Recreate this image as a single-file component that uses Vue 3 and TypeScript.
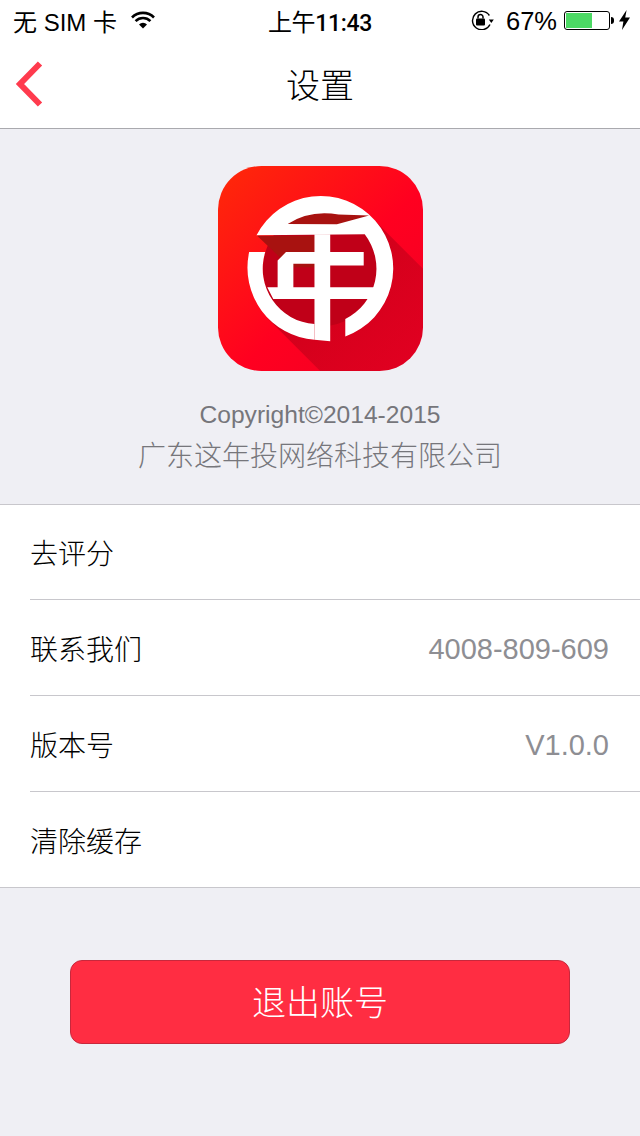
<template>
  <div class="page">
    <header class="top">
      <div class="status">
        <div class="status-left">
          <span class="carrier">无 SIM 卡</span>
          <svg class="wifi" width="24" height="18" viewBox="0 0 24 18">
            <path d="M12 17.500 8 13.600A5.500 5.500 0 0 1 16 13.600Z" fill="#000" />
            <path d="M4.600 10.100A10.500 10.500 0 0 1 19.400 10.100M1 6.500A15.500 15.500 0 0 1 23 6.500" fill="none" stroke="#000" stroke-width="2.600" />
          </svg>
        </div>
        <span class="time">上午<b>11:43</b></span>
        <div class="status-right">
          <svg width="24" height="20" viewBox="0 0 24 20">
            <path d="M20 14.500A9.200 9.200 0 1 1 19.400 5.500" fill="none" stroke="#000" stroke-width="1.400" />
            <path d="M18.800 9.500h5l-2.500 3.500Z" fill="#000" />
            <rect x="6" y="8.500" width="9" height="7" rx="1" fill="#000" />
            <path d="M8 8.500V7a2.500 2.500 0 0 1 5 0v1.500" fill="none" stroke="#000" stroke-width="1.500" />
          </svg>
          <span class="percent">67%</span>
          <div class="battery">
            <div class="battery-body"><div class="battery-fill" :style="{ width: batteryLevel + '%' }"></div></div>
            <div class="battery-tip"></div>
          </div>
          <svg class="bolt" width="11" height="20" viewBox="0 0 11 20">
            <path d="M7.600 0 0 11.600h4.400L3 20l8-12.400H6.200Z" fill="#000" />
          </svg>
        </div>
      </div>
      <nav class="nav">
        <svg class="back" width="30" height="48" viewBox="0 0 30 48">
          <path d="M26 3.500 6 24l20 20.500" fill="none" stroke="#ff3b4e" stroke-width="6" />
        </svg>
        <h1 class="title">设置</h1>
      </nav>
    </header>

    <section class="about">
      <svg class="logo" width="205" height="205" viewBox="25 18 612 612">
        <defs>
          <linearGradient id="bg" x1="0" y1="0" x2="1" y2="1">
            <stop offset="0" stop-color="#ff2a08" />
            <stop offset="0.55" stop-color="#ff0020" />
            <stop offset="1" stop-color="#f00024" />
          </linearGradient>
          <linearGradient id="shade" x1="0.1" y1="0.1" x2="1" y2="1">
            <stop offset="0" stop-color="#7a0010" stop-opacity="0.45" />
            <stop offset="1" stop-color="#7a0010" stop-opacity="0.12" />
          </linearGradient>
          <clipPath id="corner">
            <rect x="25" y="18" width="612" height="612" rx="130" />
          </clipPath>
        </defs>
        <g clip-path="url(#corner)">
          <rect x="25" y="18" width="612" height="612" fill="url(#bg)" />
          <path d="M178 478 330 630H637V325L484 172Z" fill="url(#shade)" />
          <circle cx="331" cy="325" r="172" fill="#c00018" />
          <path d="M140 225A216 216 0 1 1 405 527V475A168 168 0 0 0 463 222Z" fill="#fff" />
          <path d="M233 191Q300 148 385 163L476 166 380 192Z" fill="#a81210" />
          <path d="M142 226H313V320H240Z" fill="#a81210" />
          <path d="M118 275H166A166 166 0 0 0 313 490V537A216 216 0 0 1 118 275Z" fill="#fff" />
          <path d="M313 222H360V275H460V315H360V380H492V415H360V541L313 537V415H190L172 380H203V300L228 275H313V310H250V380H313Z" fill="#fff" />
        </g>
      </svg>
      <p class="copyright">Copyright©2014-2015</p>
      <p class="company">广东这年投网络科技有限公司</p>
    </section>

    <ul class="list">
      <li v-for="row in rows" :key="row.label" class="row">
        <div class="row-inner">
          <span class="row-label">{{ row.label }}</span>
          <span v-if="row.value" class="row-value">{{ row.value }}</span>
        </div>
      </li>
    </ul>

    <div class="logout-wrap">
      <button class="logout" type="button">退出账号</button>
    </div>
  </div>
</template>

<script setup lang="ts">
interface Row {
  label: string
  value?: string
}

const batteryLevel = 62

const rows: Row[] = [
  { label: '去评分' },
  { label: '联系我们', value: '4008-809-609' },
  { label: '版本号', value: 'V1.0.0' },
  { label: '清除缓存' }
]
</script>

<style>
html,
body {
  margin: 0;
  background: #efeff4;
}
</style>

<style scoped>
.page {
  width: 640px;
  height: 1136px;
  overflow: hidden;
  background: #efeff4;
  font-family: "Liberation Sans", "Noto Sans CJK SC", sans-serif;
  color: #000;
}

/* Header */
.top {
  background: #fff;
  border-bottom: 1px solid #a9a9ae;
}

.status {
  height: 40px;
  padding: 0 10px;
  display: grid;
  grid-template-columns: 1fr auto 1fr;
  align-items: center;
  font-size: 24px;
}

.status-left {
  padding-left: 3px;
  display: flex;
  align-items: center;
  gap: 14px;
}

.carrier {
  white-space: nowrap;
}

.time {
  letter-spacing: -0.4px;
}

.time b {
  font-family: Roboto, "Liberation Sans", sans-serif;
  font-weight: 500;
  font-size: 23px;
  letter-spacing: -0.3px;
}

.status-right {
  display: flex;
  align-items: center;
  justify-content: flex-end;
}

.percent {
  margin-left: 12px;
  padding-top: 2px;
  font-size: 25.500px;
}

.battery {
  margin-left: 7px;
  display: flex;
  align-items: center;
}

.battery-body {
  width: 46px;
  height: 19px;
  box-sizing: border-box;
  padding: 1px;
  border: 1px solid #000;
  border-radius: 3px;
}

.battery-fill {
  height: 100%;
  background: #4cd964;
}

.battery-tip {
  width: 3px;
  height: 7px;
  margin-left: 1px;
  background: #000;
  border-radius: 0 3px 3px 0;
}

.bolt {
  margin-left: 5px;
}

.nav {
  height: 88px;
  position: relative;
  display: flex;
  align-items: center;
  justify-content: center;
}

.back {
  position: absolute;
  left: 14px;
  top: 20px;
}

.title {
  margin: 0 0 2px;
  font-size: 34px;
  font-weight: 300;
  color: #000;
}

/* About */
.about {
  height: 375px;
  box-sizing: border-box;
  padding-top: 37px;
  display: flex;
  flex-direction: column;
  align-items: center;
}

.logo {
  display: block;
}

.copyright,
.company {
  margin: 0;
  color: #76767b;
  white-space: nowrap;
}

.copyright {
  margin-top: 29px;
  font-size: 24.600px;
  line-height: 30px;
}

.company {
  margin-top: 9px;
  font-size: 28px;
  font-weight: 300;
  line-height: 36px;
}

/* List */
.list {
  margin: 0;
  padding: 0;
  list-style: none;
  background: #fff;
  border-top: 1px solid #c8c7cc;
  border-bottom: 1px solid #c8c7cc;
}

.row {
  padding-left: 30px;
}

.row-inner {
  height: 95px;
  padding-right: 31px;
  display: flex;
  align-items: center;
  justify-content: space-between;
  border-bottom: 1px solid #c8c7cc;
}

.row:first-child .row-inner {
  height: 94px;
}

.row:last-child .row-inner {
  border-bottom: none;
}

.row-label {
  font-size: 28px;
  font-weight: 300;
  color: #000;
}

.row-value {
  padding-top: 4px;
  font-size: 29px;
  color: #8e8e93;
}

/* Logout */
.logout-wrap {
  padding: 72px 70px 0;
}

.logout {
  display: block;
  width: 100%;
  height: 84px;
  padding: 0 0 4px;
  border: 1px solid #c8283c;
  border-radius: 12px;
  background: #ff2d42;
  color: #fff;
  font-family: inherit;
  font-size: 34px;
  font-weight: 300;
  cursor: pointer;
}
</style>
